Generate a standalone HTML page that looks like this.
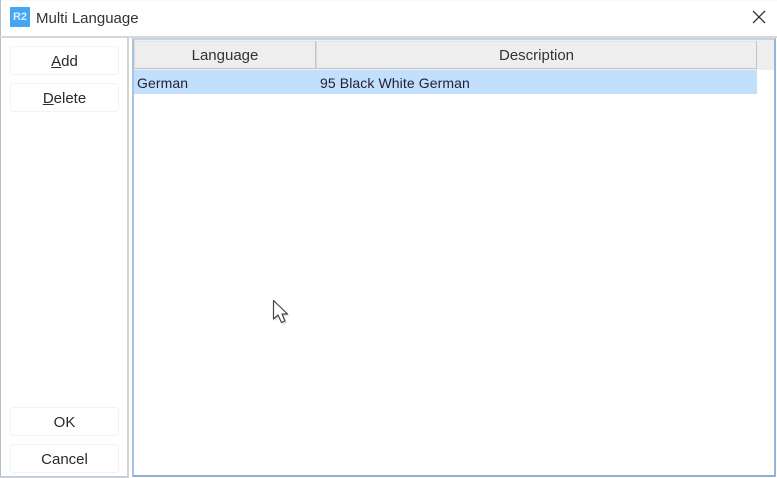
<!DOCTYPE html>
<html><head><meta charset="utf-8">
<style>
html,body{margin:0;padding:0;background:#fff}
#w{position:relative;width:777px;height:478px;overflow:hidden;background:#fff;font-family:"Liberation Sans",sans-serif;color:#222;font-size:14px;filter:blur(.35px)}
#w div{position:absolute;box-sizing:border-box}
.btn{left:10px;width:109px;border:1px solid #f3f3f3;border-radius:3px;background:#fff;text-align:center;height:29px;padding-top:2px;line-height:25px;font-size:15px;color:#2a2a2a}
.h{top:41px;height:28px;background:#eeeeee;border:1px solid #c4c4c4;border-left-color:#d8d8d8;border-top-color:#e4e4e4;text-align:center;padding-top:2px;line-height:24px;font-size:15px;color:#333}
.c{top:70px;height:24px;line-height:26px;font-size:14px;letter-spacing:.1px;color:#223;white-space:nowrap}
u{text-decoration:underline}
</style></head><body>
<div id="w">
<div style="left:0;top:0;width:777px;height:1px;background:#f4fbfb"></div>
<div style="left:0;top:0;width:1px;height:478px;background:#b4bcc4"></div>
<div style="left:10px;top:7px;width:20px;height:20px;background:#45a5f5;border-radius:1px;color:#dcefff;font-weight:bold;font-size:11px;line-height:20px;text-align:center">R2</div>
<div style="left:36px;top:10px;font-size:15px;line-height:18px;color:#333;white-space:nowrap">Multi Language</div>
<svg style="position:absolute;left:752px;top:10px" width="14" height="14" viewBox="0 0 14 14"><path d="M1 1L13 13M13 1L1 13" stroke="#333" stroke-width="1.3" fill="none"/></svg>
<div style="left:0;top:36px;width:777px;height:2px;background:#d8d8d8"></div>
<div style="left:127px;top:37px;width:2px;height:441px;background:#d4d4d4"></div>
<div style="left:0;top:476px;width:128px;height:2px;background:#c8ced4"></div>
<div class="btn" style="top:46px"><u>A</u>dd</div>
<div class="btn" style="top:83px"><u>D</u>elete</div>
<div class="btn" style="top:407px">OK</div>
<div class="btn" style="top:444px">Cancel</div>
<div style="left:132px;top:38px;width:644px;height:439px;background:#fff;border:2px solid #8fb6dc;border-top-color:#c4d4e4;border-left-color:#a8c4e0;border-bottom-color:#8fb0d0"></div>
<div style="left:134px;top:40px;width:640px;height:30px;background:#eeeeee"></div>
<div class="h" style="left:134px;width:182px">Language</div>
<div class="h" style="left:316px;width:441px">Description</div>
<div style="left:134px;top:70px;width:623px;height:24px;background:#c3dffe"></div>
<div class="c" style="left:137px">German</div>
<div class="c" style="left:320px">95 Black White German</div>
<svg style="position:absolute;left:270px;top:298px" width="24" height="30" viewBox="0 0 24 30"><path d="M5 4V23L9 19L12.5 26.5L17 25L14 18H20Z" fill="#000" opacity=".12"/><path d="M3.5 2.5V21L8 17L11.5 24.5L15 23L12 16H17.5Z" fill="#fff" stroke="#444" stroke-width="1.2" stroke-linejoin="round"/></svg>
</div>
</body></html>
